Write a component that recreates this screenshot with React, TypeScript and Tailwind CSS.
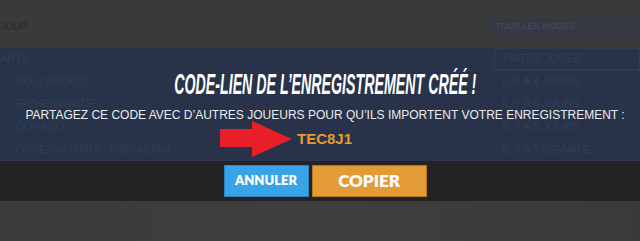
import React from 'react';

const rows = [
  { left: 'ARTE', right: 'PARTIE JOUÉE' },
  { left: 'HOLLYWOOD', right: 'IL Y A 4 JOURS' },
  { left: 'EICHENWALDE', right: 'IL Y A 5 JOURS' },
  { left: 'DORADO', right: 'IL Y A 5 JOURS' },
  { left: 'OBSERVATOIRE : GIBRALTAR', right: 'IL Y A 1 SEMAINE' },
];

const Arrow: React.FC = () => (
  <svg width="73" height="37" viewBox="0 0 73 37" className="shrink-0">
    <polygon points="0,8 32,8 32,0 72,18 32,36 32,26 0,26" fill="#e81f28" />
  </svg>
);

const App: React.FC = () => {
  return (
    <div className="w-[640px] h-[241px] overflow-hidden flex flex-col bg-[#3c3b3a] font-['Liberation_Sans',Arial,sans-serif]">
      {/* page header behind the dialog */}
      <div className="h-[48px] shrink-0 bg-[#3a3a3a] flex items-start justify-between">
        <span className="mt-[21px] text-[10px] leading-[12px] font-bold text-[#2e2e2e]">JOUR</span>
        <div className="mt-[18px] w-[155px] h-[18px] bg-[#343944] flex items-center pl-[10px]">
          <span className="text-[9px] font-bold text-[#3f485a]">TOUS LES MODES</span>
        </div>
      </div>

      {/* dialog band */}
      <div className="relative h-[113px] shrink-0 bg-[#28334a]">
        {/* faint table seen through the overlay */}
        <div className="absolute inset-0 flex flex-col text-[11px] leading-[13px] text-[#313d55]">
          {rows.map((r, i) => (
            <div key={i} className="h-[22.6px] flex items-center border-b border-[#2c374e]">
              <span className={`${i === 0 ? 'pl-0' : 'pl-[16px]'} flex-1`}>{r.left}</span>
              <span className={`w-[146px] h-full pl-[8px] flex items-center ${i === 0 ? 'border border-[#303c55]' : ''}`}>{r.right}</span>
            </div>
          ))}
        </div>

        <div className="relative flex flex-col items-center pl-[10px]">
          <h1 className="mt-[22px] text-[29px] leading-[29px] italic font-bold text-white scale-x-[0.49] whitespace-nowrap">
            CODE-LIEN DE L&rsquo;ENREGISTREMENT CRÉÉ !
          </h1>
          <p className="mt-[9px] text-[12px] leading-[14px] text-[#ececec] whitespace-nowrap">
            PARTAGEZ CE CODE AVEC D&rsquo;AUTRES JOUEURS POUR QU&rsquo;ILS IMPORTENT VOTRE ENREGISTREMENT :
          </p>
          <div className="-mt-[1px] flex items-center gap-[4px] -ml-[78px]">
            <Arrow />
            <span className="text-[15px] font-bold text-[#e69b2e]">TEC8J1</span>
          </div>
        </div>
      </div>

      {/* dialog buttons */}
      <div className="h-[40px] shrink-0 bg-[#232225] flex items-center justify-center gap-[3px] pl-[10px]">
        <button className="w-[85px] h-[32px] bg-[#3aa3e8] border border-[#2a86c4] text-white font-['Lato',sans-serif] font-extrabold text-[13px]">
          ANNULER
        </button>
        <button className="w-[115px] h-[32px] bg-[#e39b36] border border-[#b8741f] text-white font-['Lato',sans-serif] font-extrabold text-[17px]">
          COPIER
        </button>
      </div>

      <div className="flex-1 bg-gradient-to-r from-[#3b3b3b] via-[#3f3e3d] to-[#3b3a39]" />
    </div>
  );
};

export default App;
